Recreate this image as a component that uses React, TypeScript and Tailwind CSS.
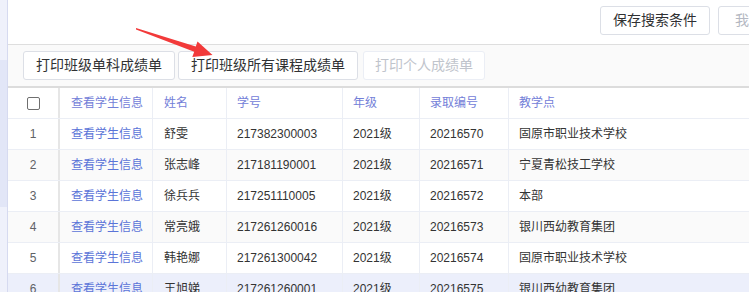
const FONT = { fontFamily: '"Liberation Sans", "Noto Sans CJK SC", sans-serif' };

type Row = { no: number; name: string; sid: string; grade: string; adm: string; site: string };

const rows: Row[] = [
  { no: 1, name: "舒雯", sid: "217382300003", grade: "2021级", adm: "20216570", site: "固原市职业技术学校" },
  { no: 2, name: "张志峰", sid: "217181190001", grade: "2021级", adm: "20216571", site: "宁夏青松技工学校" },
  { no: 3, name: "徐兵兵", sid: "217251110005", grade: "2021级", adm: "20216572", site: "本部" },
  { no: 4, name: "常亮娥", sid: "217261260016", grade: "2021级", adm: "20216573", site: "银川西幼教育集团" },
  { no: 5, name: "韩艳娜", sid: "217261300042", grade: "2021级", adm: "20216574", site: "固原市职业技术学校" },
  { no: 6, name: "王旭娣", sid: "217261260001", grade: "2021级", adm: "20216575", site: "银川西幼教育集团" },
];

const cols = "grid grid-cols-[52px_93px_74px_116px_77px_89px_1fr]";

function Btn({ children, disabled, className = "" }: { children: React.ReactNode; disabled?: boolean; className?: string }) {
  return (
    <button
      className={
        (disabled
          ? "h-[29px] shrink-0 rounded-[3px] border border-[#ebeef5] bg-white px-[11px] text-[14px] text-[#c0c4cc] "
          : "h-[29px] shrink-0 rounded-[3px] border border-[#dcdfe6] bg-white px-3 text-[14px] text-[#303133] ") + className
      }
    >
      {children}
    </button>
  );
}

function Arrow() {
  return (
    <svg className="pointer-events-none absolute left-0 top-0" width="230" height="70" viewBox="0 0 230 70">
      <polygon
        points="136,28 195.8,46.6 197.5,41.4 212.5,55 192.3,57 194.2,51.8 136,29.6"
        fill="#f23a3a"
      />
    </svg>
  );
}

export default function App() {
  return (
    <div className="relative flex h-[292px] w-[749px] overflow-hidden bg-white" style={FONT}>
      {/* side menu edge */}
      <div className="flex w-[8px] shrink-0 flex-col border-r border-[#d6daf0]">
        <div className="h-[60px] bg-[#eff1fb]" />
        <div className="h-[147px] bg-[#e2e6f7]" />
        <div className="flex-1 bg-[#eff1fb]" />
      </div>

      <div className="flex min-w-0 flex-1 flex-col">
        {/* top bar */}
        <div className="flex h-[45px] shrink-0 items-start gap-[8px] border-b border-[#dedede] pl-[592px] pt-[6px]">
          <Btn>保存搜索条件</Btn>
          <button className="h-[29px] shrink-0 rounded-[3px] border border-[#dcdfe6] bg-white px-[16px] text-[14px] text-[#b4b8c2]">
            我的搜索条件
          </button>
        </div>

        {/* toolbar */}
        <div className="flex h-[41px] shrink-0 items-start bg-[#fafafa] pl-[15px] pt-[6px]">
          <Btn>打印班级单科成绩单</Btn>
          <Btn className="ml-[3px]">打印班级所有课程成绩单</Btn>
          <Btn disabled className="ml-[5px]">打印个人成绩单</Btn>
        </div>

        {/* table */}
        <div className="border-t-2 border-[#dcdcdc] text-[12px]">
          <div className={`${cols} h-[31px] border-b border-[#ebeef5] text-[#7380d8]`}>
            <div className="flex items-center justify-center border-r-2 border-[#e6e6e6]">
              <span className="h-[13px] w-[13px] rounded-[2px] border border-[#6f6f6f] bg-white" />
            </div>
            <div className="flex items-center border-r border-[#ebeef5] pl-[11px]">查看学生信息</div>
            <div className="flex items-center border-r border-[#ebeef5] pl-[11px]">姓名</div>
            <div className="flex items-center border-r border-[#ebeef5] pl-[10px]">学号</div>
            <div className="flex items-center border-r border-[#ebeef5] pl-[10px]">年级</div>
            <div className="flex items-center border-r border-[#ebeef5] pl-[10px]">录取编号</div>
            <div className="flex items-center pl-[10px]">教学点</div>
          </div>
          {rows.map((r) => (
            <div
              key={r.no}
              className={`${cols} h-[31px] border-b border-[#ebeef5] text-[#333] ${
                r.no === 6 ? "bg-[#eceffb]" : r.no % 2 === 0 ? "bg-[#fafafa]" : "bg-white"
              }`}
            >
              <div className="flex items-center justify-center border-r-2 border-[#e6e6e6] text-[#606266]">{r.no}</div>
              <div className="flex items-center border-r border-[#ebeef5] pl-[11px] text-[#5b74d8]">查看学生信息</div>
              <div className="flex items-center border-r border-[#ebeef5] pl-[11px]">{r.name}</div>
              <div className="flex items-center border-r border-[#ebeef5] pl-[10px]">{r.sid}</div>
              <div className="flex items-center border-r border-[#ebeef5] pl-[10px]">{r.grade}</div>
              <div className="flex items-center border-r border-[#ebeef5] pl-[10px]">{r.adm}</div>
              <div className="flex items-center pl-[10px]">{r.site}</div>
            </div>
          ))}
        </div>
      </div>

      <Arrow />
    </div>
  );
}
